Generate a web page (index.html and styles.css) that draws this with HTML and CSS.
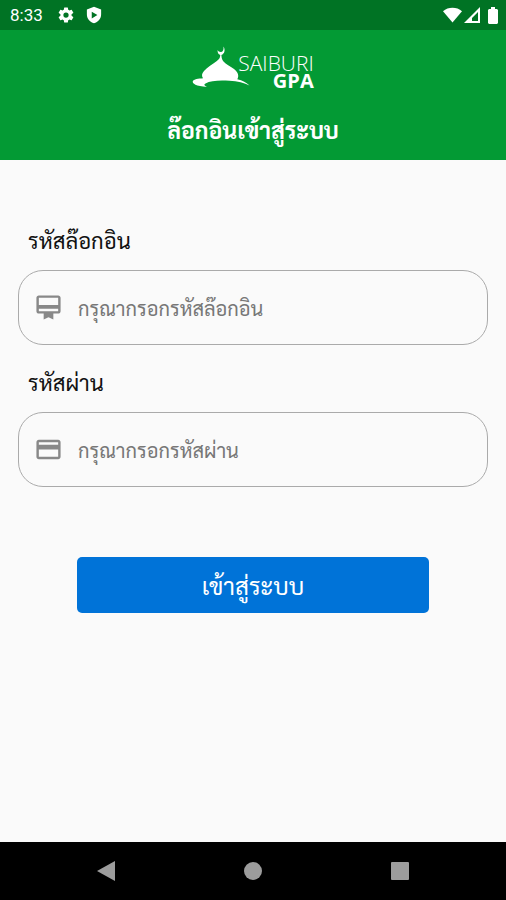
FILE: index.html
```html
<!DOCTYPE html>
<html lang="th">
<head>
<meta charset="utf-8">
<meta name="viewport" content="width=device-width, initial-scale=1">
<title>SAIBURI GPA</title>
<link rel="stylesheet" href="styles.css">
</head>
<body>
<div class="status-bar">
  <div class="status-group">
    <span class="clock">8:33</span>
    <svg class="status-icon" viewBox="0 0 24 24"><path d="M19.4 13a7.500 7.500 0 0 0 0-2l2.200-1.700a.5.5 0 0 0 .1-.6l-2-3.500a.5.5 0 0 0-.6-.2l-2.500 1a7.300 7.300 0 0 0-1.700-1l-.4-2.600a.5.5 0 0 0-.5-.4h-4a.5.5 0 0 0-.5.4L9.100 5a7.700 7.700 0 0 0-1.700 1l-2.500-1a.5.5 0 0 0-.6.2l-2 3.500a.5.5 0 0 0 .1.6L4.600 11a7.900 7.900 0 0 0 0 2l-2.200 1.700a.5.5 0 0 0-.1.6l2 3.500c.1.200.4.300.6.200l2.500-1a7.300 7.300 0 0 0 1.700 1l.4 2.600c0 .2.200.4.500.4h4c.3 0 .5-.2.500-.4l.4-2.600a7.700 7.700 0 0 0 1.700-1l2.500 1c.2.100.5 0 .6-.2l2-3.500a.5.500 0 0 0-.1-.6zM12 15.500a3.500 3.500 0 1 1 0-7 3.500 3.500 0 0 1 0 7z"/></svg>
    <svg class="status-icon" viewBox="0 0 24 24"><path fill-rule="evenodd" d="M12 1 2.500 4.500V11c0 6 4 10.300 9.500 12 5.500-1.700 9.500-6 9.500-12V4.500zM9 7.500 16.500 12l-7.500 4.500z"/></svg>
  </div>
  <div class="status-group status-right">
    <svg class="wifi" viewBox="0 0 20 16"><path d="M10 16 0 4C5.500-.7 14.500-.7 20 4z"/></svg>
    <svg class="signal" viewBox="0 0 16 16"><path fill-rule="evenodd" d="M16 0v16H0zM14 5 8 11v3h6z"/></svg>
    <svg class="battery" viewBox="0 0 10 17"><path d="M3 0h4v2h2l1 1v13l-1 1H1l-1-1V3l1-1h2z"/></svg>
  </div>
</div>
<header class="header">
  <div class="logo">
    <svg class="mosque" viewBox="0 0 58 44"><path d="M28.300 10c-.2 3-1 4.200-3.800 6.300-4 3-9 5.700-12.500 9.700-2.400 2.800-2.500 5-1 7.200-4.500.4-9.400.8-10.200 3-.8 2.300 3.200 4.800 14.200 5.800-2.500-1.500-3.500-2.500-1.500-3.600 5-2.800 14-3.200 24-2.600 8 .5 15 2.200 20 4.600-3-3-7-4.900-12.200-6.200 2-3.200.8-7.200-3.300-10.200-4-3-8-4.500-10.500-7.500-1.300-1.600-1.900-3.200-2.100-6.500 3.300-1.300 4.100-5 2.100-8.500.4 3.600-.7 5.500-2.700 5.600-1.500 0-2.700-.7-3.200-2-.2 2.500.7 4.200 2.700 4.900z"/></svg>
    <div class="wordmark"><span class="brand">SAIBURI</span><strong class="brand-sub">GPA</strong></div>
  </div>
  <h1 class="title">ล๊อกอินเข้าสู่ระบบ</h1>
</header>
<main class="main">
  <form class="form">
    <label class="label" for="login">รหัสล๊อกอิน</label>
    <div class="field">
      <svg class="field-icon" viewBox="0 0 24 24"><path d="M20 2H4c-1.110 0-2 .89-2 2v11c0 1.110.89 2 2 2h4v5l4-2 4 2v-5h4c1.110 0 2-.89 2-2V4c0-1.110-.89-2-2-2zm0 13H4v-2h16v2zm0-5H4V4h16v6z"/></svg>
      <input class="input" id="login" type="text" placeholder="กรุณากรอกรหัสล๊อกอิน">
    </div>
    <label class="label" for="password">รหัสผ่าน</label>
    <div class="field">
      <svg class="field-icon" viewBox="0 0 24 24"><path d="M20 4H4c-1.110 0-1.990.89-1.990 2L2 18c0 1.110.89 2 2 2h16c1.110 0 2-.89 2-2V6c0-1.110-.89-2-2-2zm0 14H4v-6h16v6zm0-10H4V6h16v2z"/></svg>
      <input class="input" id="password" type="password" placeholder="กรุณากรอกรหัสผ่าน">
    </div>
    <button class="submit" type="button">เข้าสู่ระบบ</button>
  </form>
</main>
<nav class="nav-bar">
  <button class="nav-button" type="button" aria-label="Back"><svg class="nav-icon" viewBox="0 0 20 22"><path d="M19 1v20L1 11z"/></svg></button>
  <button class="nav-button" type="button" aria-label="Home"><svg class="nav-icon" viewBox="0 0 20 22"><circle cx="10" cy="11" r="9"/></svg></button>
  <button class="nav-button" type="button" aria-label="Recent apps"><svg class="nav-icon" viewBox="0 0 20 22"><rect x="1" y="2" width="18" height="18" rx="1"/></svg></button>
</nav>
</body>
</html>
```
FILE: styles.css
```css
* { box-sizing: border-box; }
body {
  margin: 0;
  min-height: 100vh;
  display: flex;
  flex-direction: column;
  background: #fafafa;
  color: #111;
  font-family: Sarabun, "Noto Sans Thai Looped", Loma, Garuda, "Noto Serif Thai", "Noto Sans Thai", Roboto, sans-serif;
}
.status-bar {
  height: 30px;
  padding: 0 8px 0 10px;
  display: flex;
  align-items: center;
  justify-content: space-between;
  background: #007324;
  color: #fff;
}
.status-group { display: flex; align-items: center; gap: 10px; }
.status-right { gap: 2px; }
.clock { font-family: Roboto, sans-serif; font-size: 17px; line-height: 20px; margin-right: 4px; }
.status-bar svg { fill: #fff; }
.status-icon { width: 18px; height: 18px; }
.wifi { width: 19px; height: 16px; }
.signal { width: 16px; height: 16px; margin-right: 6px; }
.battery { width: 10px; height: 17px; }
.header {
  height: 130px;
  padding-top: 15px;
  display: flex;
  flex-direction: column;
  align-items: center;
  gap: 23px;
  background: #039a34;
  color: #fff;
}
.logo { display: flex; align-items: flex-end; }
.mosque { width: 58px; height: 44px; margin-right: -12px; fill: #fff; }
.wordmark {
  display: flex;
  flex-direction: column;
  align-items: flex-end;
  font-family: "Open Sans", sans-serif;
}
.brand { font-size: 21px; line-height: 17px; font-weight: 300; }
.brand-sub { font-size: 20px; line-height: 17px; }
.title { margin: 0; font-size: 23px; line-height: 34px; font-weight: 700; }
.main { flex: 1; padding: 63px 18px 0; }
.form { display: flex; flex-direction: column; }
.label { padding-left: 10px; font-size: 22px; line-height: 34px; }
.field {
  height: 75px;
  margin: 13px 0 20px;
  padding: 0 15px;
  display: flex;
  align-items: center;
  gap: 15px;
  border: 1px solid #aaa;
  border-radius: 25px;
}
.field-icon { width: 29px; height: 29px; flex: none; fill: #888; }
.input {
  flex: 1;
  min-width: 0;
  height: 48px;
  padding: 0;
  border: 0;
  outline: 0;
  background: transparent;
  color: #111;
  font: inherit;
  font-size: 20px;
  line-height: 48px;
}
.input::placeholder { color: #777; opacity: 1; overflow: visible; }
.submit {
  width: 75%;
  height: 56px;
  margin: 50px auto 0;
  border: 0;
  border-radius: 5px;
  background: #0073d8;
  color: #fff;
  font: inherit;
  font-size: 24px;
}
.nav-bar {
  height: 58px;
  padding: 0 33px;
  display: flex;
  align-items: center;
  background: #000;
}
.nav-button {
  flex: 1;
  display: flex;
  justify-content: center;
  padding: 0;
  border: 0;
  background: none;
}
.nav-icon { width: 20px; height: 22px; fill: #9c9c9c; }
```
